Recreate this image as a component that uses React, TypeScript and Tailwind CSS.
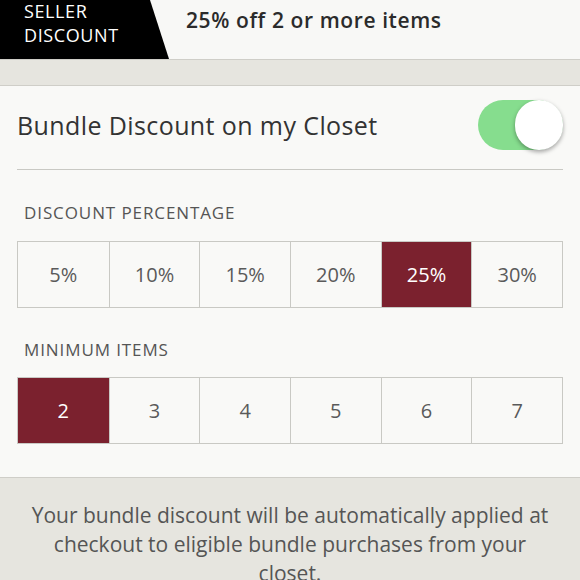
import { useState } from "react";

const PERCENTS = ["5%", "10%", "15%", "20%", "25%", "30%"];
const MIN_ITEMS = ["2", "3", "4", "5", "6", "7"];

function OptionRow({ options, selected }: { options: string[]; selected: string }) {
  return (
    <div className="grid grid-cols-6 border border-[#c9c9c4] h-[67px]">
      {options.map((opt, i) => (
        <div
          key={opt}
          className={`flex items-center justify-center text-[20px] ${i > 0 ? "border-l border-[#c9c9c4]" : ""} ${
            opt === selected ? "bg-[#7b212e] text-white" : "text-[#5a5a5a]"
          }`}
        >
          {opt}
        </div>
      ))}
    </div>
  );
}

export default function App() {
  const [enabled] = useState(true);

  return (
    <div className="w-[580px] h-[580px] overflow-hidden flex flex-col bg-[#f8f8f6] font-['Open_Sans','Lato',sans-serif]">
      {/* Header */}
      <div className="flex items-center h-[59px] shrink-0 bg-[#f8f8f6]">
        <div className="relative h-full w-[170px] shrink-0">
          <svg className="absolute inset-0" width="170" height="59" viewBox="0 0 170 59">
            <polygon points="0,0 150,0 169,59 0,59" fill="#000" />
          </svg>
          <div className="relative pl-[24px] text-white text-[18px] leading-[24px] tracking-[0.6px] -mt-[1px]">
            <div>SELLER</div>
            <div>DISCOUNT</div>
          </div>
        </div>
        <div className="pl-[16px] -mt-[18px] text-[21px] font-semibold tracking-[0.6px] text-[#2b2b2b]">
          25% off 2 or more items
        </div>
      </div>

      {/* gray band */}
      <div className="h-[27px] shrink-0 bg-[#e6e5df] border-y border-[#cfcec8]" />

      {/* Card */}
      <div className="px-[17px] pb-[33px] shrink-0 bg-[#f9f9f7]">
        <div className="flex items-center justify-between h-[84px] border-b border-[#c9c9c4]">
          <span className="text-[25px] tracking-[0.4px] text-[#333] -mt-[4px]">Bundle Discount on my Closet</span>
          <div className="relative w-[85px] h-[50px] rounded-full bg-[#86dd8e] -mt-[5px]">
            <div
              className={`absolute top-0 w-[48px] h-[50px] rounded-full bg-white shadow-[0_2px_4px_rgba(0,0,0,0.35)] ${
                enabled ? "right-0" : "left-0"
              }`}
            />
          </div>
        </div>

        <div className="pt-[34px] pb-[20px] pl-[7px] text-[17px] tracking-[0.9px] text-[#555] leading-none">
          DISCOUNT PERCENTAGE
        </div>
        <OptionRow options={PERCENTS} selected="25%" />

        <div className="pt-[33px] pb-[19px] pl-[7px] text-[17px] tracking-[0.9px] text-[#555] leading-none">
          MINIMUM ITEMS
        </div>
        <OptionRow options={MIN_ITEMS} selected="2" />
      </div>

      {/* Footer note */}
      <div className="flex-1 bg-[#e6e5df] border-t border-[#cfcec8] px-[22px] pt-[23px] text-center text-[21px] leading-[29px] text-[#555]">
        Your bundle discount will be automatically applied at checkout to eligible bundle purchases from your closet.
      </div>
    </div>
  );
}
